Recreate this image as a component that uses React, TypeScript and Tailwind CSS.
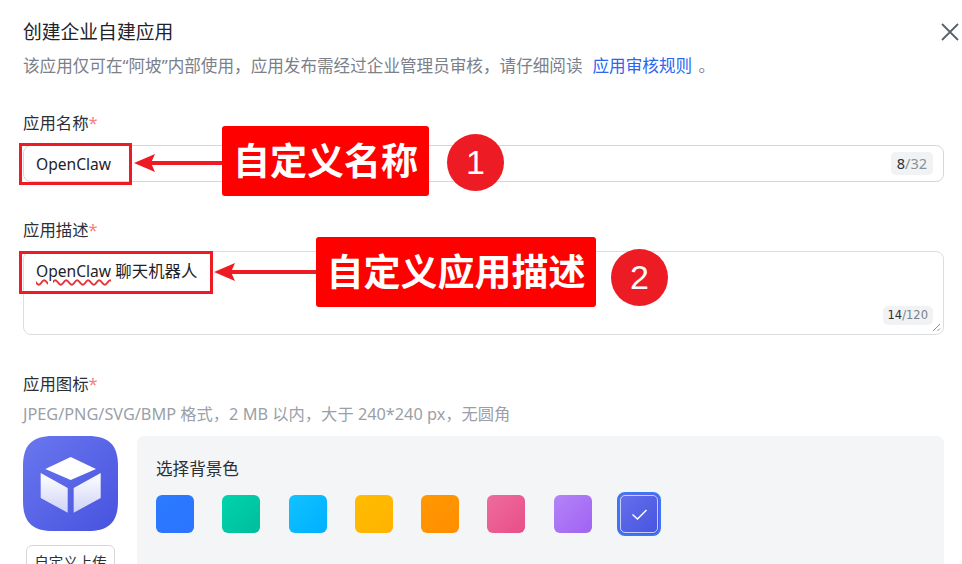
const swatches = [
  "from-[#2b7bff] to-[#2b74ff]",
  "from-[#00d4ae] to-[#00bd9c]",
  "from-[#12c2ff] to-[#00b0ff]",
  "from-[#ffbc00] to-[#ffb300]",
  "from-[#ff9800] to-[#ff8e00]",
  "from-[#ee6c9c] to-[#e84d88]",
  "from-[#b484f8] to-[#9f62f2]",
];

function Label({ text }: { text: string }) {
  return (
    <div className="text-[16.4px] leading-[24px] text-[#2b2f36]">
      {text}
      <span className="text-[#f7807c]">*</span>
    </div>
  );
}

function Arrow({ className, width }: { className: string; width: number }) {
  return (
    <svg className={className} width={width} height="24" viewBox={`0 0 ${width} 24`}>
      <rect x="16" y="10" width={width - 16} height="4" fill="#ed1c24" />
      <path d="M0 12 L21 3 L17 12 L21 21 Z" fill="#ed1c24" />
    </svg>
  );
}

function CubeLogo() {
  return (
    <svg width="95" height="95" viewBox="0 0 95 95">
      <defs>
        <linearGradient id="logoBg" x1="0" y1="0" x2="1" y2="1">
          <stop offset="0" stopColor="#6a77ee" />
          <stop offset="1" stopColor="#4753df" />
        </linearGradient>
        <linearGradient id="cubeFace" x1="0" y1="0" x2="0" y2="1">
          <stop offset="0" stopColor="#ffffff" />
          <stop offset="1" stopColor="#cfd2f6" />
        </linearGradient>
      </defs>
      <path
        d="M30 0 H65 C86 0 95 9 95 30 V65 C95 86 86 95 65 95 H30 C9 95 0 86 0 65 V30 C0 9 9 0 30 0 Z"
        fill="url(#logoBg)"
      />
      <path d="M47.7 21 L73 33 L47.7 44 L22.3 33 Z" fill="#ffffff" />
      <path d="M17.7 37 L44.7 52 L44.7 76.7 L17.7 62 Z" fill="url(#cubeFace)" />
      <path d="M50.7 52 L77.7 37 L77.7 62 L50.7 76.7 Z" fill="url(#cubeFace)" />
    </svg>
  );
}

export default function App() {
  return (
    <div className="relative h-[564px] w-[962px] overflow-hidden bg-white pl-[23px] pr-[18px] pt-[18px] font-['Noto_Sans','Noto_Sans_CJK_SC',sans-serif]">
      <div className="flex h-[28px] items-center justify-between">
        <div className="text-[18.8px] leading-[28px] text-[#1f2329]">创建企业自建应用</div>
        <svg width="20" height="20" viewBox="0 0 20 20" className="mr-[-16px]" fill="none" stroke="#5a616b" strokeWidth="1.8">
          <path d="M2 2 L18 18 M18 2 L2 18" />
        </svg>
      </div>
      <div className="mt-[8px] text-[16.6px] leading-[24px] text-[#7b8089]">
        该应用仅可在“阿坡”内部使用，应用发布需经过企业管理员审核，请仔细阅读
        <span className="ml-[10px] text-[#2a66f0]">应用审核规则</span>
        <span className="ml-[2px]"> 。</span>
      </div>

      <div className="mt-[33px]">
        <Label text="应用名称" />
      </div>
      <div className="mt-[10px] flex h-[37px] items-center justify-between rounded-[8px] border border-[#d5d7db] pl-[12px] pr-[10px]">
        <span className="pt-[2px] text-[15.6px] text-[#1f2329]">OpenClaw</span>
        <span className="rounded-[5px] bg-[#f1f2f4] px-[6px] text-[14.5px] leading-[23px] text-[#8a8f98]">
          <span className="text-[#2b2f36]">8</span>/32
        </span>
      </div>

      <div className="mt-[36px]">
        <Label text="应用描述" />
      </div>
      <div className="relative mt-[9px] h-[84px] rounded-[8px] border border-[#dcdde0] pl-[12px] pt-[7px]">
        <div className="text-[16.4px] leading-[24px] text-[#1f2329]">
          <span className="text-[15.6px] underline decoration-[#e5343a] decoration-wavy decoration-[1.5px] underline-offset-2">OpenClaw</span> 聊天机器人
        </div>
        <span className="absolute bottom-[9px] right-[10px] rounded-[5px] bg-[#f1f2f4] px-[5px] font-['DejaVu_Sans',sans-serif] text-[11.5px] leading-[19px] text-[#7b8089]">
          <span className="text-[#2b2f36]">14</span>/120
        </span>
        <svg className="absolute bottom-[2px] right-[2px]" width="9" height="9" viewBox="0 0 9 9" stroke="#8a8f98" strokeWidth="1">
          <path d="M1 8 L8 1 M5.5 8 L8 5.5" />
        </svg>
      </div>

      <div className="mt-[37px]">
        <Label text="应用图标" />
      </div>
      <div className="mt-[7px] text-[16.3px] leading-[22px] text-[#9a9fa8]">
        JPEG/PNG/SVG/BMP 格式，2 MB 以内，大于 240*240 px，无圆角
      </div>

      <div className="mt-[11px] flex gap-[19px]">
        <div className="flex w-[95px] shrink-0 flex-col items-center">
          <CubeLogo />
          <div className="mt-[14px] flex h-[36px] w-[89px] items-center justify-center rounded-[6px] border border-[#d5d7db] text-[14.5px] text-[#2b2f36]">
            自定义上传
          </div>
        </div>
        <div className="h-[140px] flex-1 rounded-[7px] bg-[#f4f5f7] pl-[19px] pt-[22px]">
          <div className="text-[16.6px] leading-[22px] text-[#2b2f36]">选择背景色</div>
          <div className="mt-[12px] flex items-center gap-[28.3px]">
            {swatches.map((s) => (
              <div key={s} className={`h-[38px] w-[38px] rounded-[6px] bg-linear-to-br ${s}`} />
            ))}
            <div className="ml-[-3px] flex h-[44px] w-[44px] items-center justify-center rounded-[8px] border-[2px] border-[#3b76f6] bg-linear-to-br from-[#6570ec] to-[#4753df] p-[1px]">
              <div className="flex h-full w-full items-center justify-center rounded-[5px] border border-[#c9cef8]">
                <svg width="17" height="13" viewBox="0 0 17 13" fill="none" stroke="#ffffff" strokeWidth="1.5">
                  <path d="M1.5 6.5 L6.5 11 L15.5 2" />
                </svg>
              </div>
            </div>
          </div>
        </div>
      </div>

      {/* annotations drawn over the form */}
      <div className="absolute left-[19px] top-[143px] h-[42px] w-[113px] border-[3px] border-[#ed1c24]" />
      <Arrow className="absolute left-[134px] top-[151px]" width={90} />
      <div className="absolute left-[222px] top-[126px] flex h-[70px] w-[207px] items-center justify-center rounded-[3px] bg-[#ff0000] pb-[3px] font-['Noto_Sans_CJK_SC',sans-serif] text-[37px] font-bold text-white">
        自定义名称
      </div>
      <div className="absolute left-[447px] top-[134px] flex h-[57px] w-[57px] items-center justify-center rounded-full bg-[#ed1c24] font-['Liberation_Sans',sans-serif] text-[34px] text-white">
        1
      </div>

      <div className="absolute left-[19px] top-[251px] h-[43px] w-[194px] border-[3px] border-[#ed1c24]" />
      <Arrow className="absolute left-[214px] top-[260px]" width={104} />
      <div className="absolute left-[316px] top-[237px] flex h-[70px] w-[280px] items-center justify-center rounded-[3px] bg-[#ff0000] pb-[3px] font-['Noto_Sans_CJK_SC',sans-serif] text-[37px] font-bold text-white">
        自定义应用描述
      </div>
      <div className="absolute left-[611px] top-[249px] flex h-[57px] w-[57px] items-center justify-center rounded-full bg-[#ed1c24] font-['Liberation_Sans',sans-serif] text-[34px] text-white">
        2
      </div>
    </div>
  );
}
